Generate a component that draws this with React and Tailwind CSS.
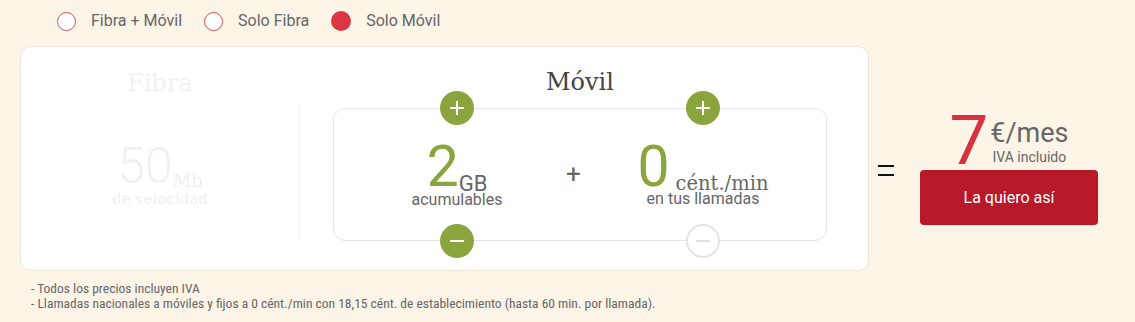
import React from "react";

const sans = { fontFamily: "Roboto, 'Liberation Sans', sans-serif" };
const slab = { fontFamily: "'Roboto Slab', 'DejaVu Serif', serif" };

function Radio({ label, active }) {
  return (
    <div className="flex items-center">
      {active ? (
        <span className="block h-[20px] w-[20px] rounded-full bg-[#dc3545]" />
      ) : (
        <span className="block h-[19px] w-[19px] rounded-full border border-[#d9545f] bg-white" />
      )}
      <span className="ml-[15px] text-[16px] text-[#666666]">{label}</span>
    </div>
  );
}

function RoundBtn({ type, disabled }) {
  if (disabled) {
    return (
      <div className="flex h-[34px] w-[34px] items-center justify-center rounded-full border-2 border-[#e4e4e4] bg-white">
        <span className="block h-[2px] w-[14px] bg-[#e0e0e0]" />
      </div>
    );
  }
  return (
    <div className="relative flex h-[34px] w-[34px] items-center justify-center rounded-full bg-[#8aa53d]">
      <span className="absolute block h-[2px] w-[14px] bg-white" />
      {type === "plus" && <span className="absolute block h-[14px] w-[2px] bg-white" />}
    </div>
  );
}

export default function App() {
  return (
    <div className="h-[322px] w-[1135px] bg-[#fcf4e6]" style={sans}>
      <div className="flex h-[46px] items-center gap-[22px] pb-[4px] pl-[57px]">
        <Radio label="Fibra + Móvil" />
        <Radio label="Solo Fibra" />
        <Radio label="Solo Móvil" active />
      </div>
      <div className="ml-[20px] flex items-start">
        <div className="flex h-[225px] w-[849px] rounded-[11px] border border-[#efe6d6] bg-white">
          {/* Fibra column */}
          <div className="flex w-[278px] flex-col items-center pt-[22px]">
            <div className="text-[24px] leading-[28px] text-[#f2f2f2]" style={slab}>
              Fibra
            </div>
            <div className="mt-[46px] flex items-end">
              <span className="text-[50px] font-light leading-[46px] text-[#f0f0f0]">50</span>
              <span className="mb-[-2px] text-[18px] leading-[20px] text-[#f0f0f0]" style={slab}>
                Mb
              </span>
            </div>
            <div className="mt-[1px] text-[15px] leading-[18px] text-[#f0f0f0]" style={slab}>
              de velocidad
            </div>
          </div>
          <div className="mt-[58px] h-[135px] border-l border-dotted border-[#e6e6e6]" />
          {/* Movil column */}
          <div className="flex flex-1 flex-col items-center pl-[28px] pr-[36px] pt-[21px]">
            <div className="text-[24px] leading-[28px] text-[#444444]" style={slab}>
              Móvil
            </div>
            <div className="relative mt-[12px] flex h-[133px] w-[494px] rounded-[12px] border border-[#e6e6e6]">
              <div className="relative flex w-1/2 flex-col items-center">
                <div className="absolute top-[-18px]">
                  <RoundBtn type="plus" />
                </div>
                <div className="mt-[32px] flex items-end">
                  <span className="text-[57px] leading-[52px] text-[#8aa53d]">2</span>
                  <span className="mb-[-2px] text-[22px] leading-[22px] text-[#666666]">GB</span>
                </div>
                <div className="mt-[-3px] text-[16px] leading-[20px] text-[#666666]">acumulables</div>
                <div className="absolute bottom-[-18px]">
                  <RoundBtn type="minus" />
                </div>
              </div>
              <div className="absolute left-[232px] top-[52px] text-[26px] leading-[26px] text-[#666666]">+</div>
              <div className="relative flex w-1/2 flex-col items-center">
                <div className="absolute top-[-18px]">
                  <RoundBtn type="plus" />
                </div>
                <div className="mt-[32px] flex items-end">
                  <span className="text-[57px] leading-[52px] text-[#8aa53d]">0</span>
                  <span className="mb-[-1px] ml-[6px] text-[19.5px] leading-[20px] text-[#666666]" style={slab}>
                    cént./min
                  </span>
                </div>
                <div className="mt-[-4px] text-[16px] leading-[20px] text-[#666666]">en tus llamadas</div>
                <div className="absolute bottom-[-18px]">
                  <RoundBtn disabled />
                </div>
              </div>
            </div>
          </div>
        </div>
        {/* equals */}
        <div className="ml-[9px] mt-[119px] flex flex-col gap-[7px]">
          <span className="block h-[2px] w-[16px] bg-[#111111]" />
          <span className="block h-[2px] w-[16px] bg-[#111111]" />
        </div>
        {/* price */}
        <div className="ml-[26px] mt-[66px] flex flex-col items-center">
          <div className="flex items-start">
            <span className="text-[69px] leading-[58px] text-[#d7323f]">7</span>
            <div className="ml-[2px] mt-[7px] flex flex-col items-center">
              <span className="text-[27px] leading-[28px] text-[#666666]">€/mes</span>
              <span className="mt-[2px] text-[14px] leading-[16px] text-[#666666]">IVA incluido</span>
            </div>
          </div>
          <button className="flex h-[55px] w-[178px] items-center justify-center rounded-[4px] bg-[#b81827] text-[16px] text-white">
            La quiero así
          </button>
        </div>
      </div>
      <div
        className="ml-[31px] mt-[10px] text-[13.5px] leading-[15px] text-[#666666]"
        style={{ fontFamily: "'Roboto Condensed', 'Liberation Sans Narrow', 'Arial Narrow', Roboto, sans-serif" }}
      >
        <div>- Todos los precios incluyen IVA</div>
        <div>- Llamadas nacionales a móviles y fijos a 0 cént./min con 18,15 cént. de establecimiento (hasta 60 min. por llamada).</div>
      </div>
    </div>
  );
}
